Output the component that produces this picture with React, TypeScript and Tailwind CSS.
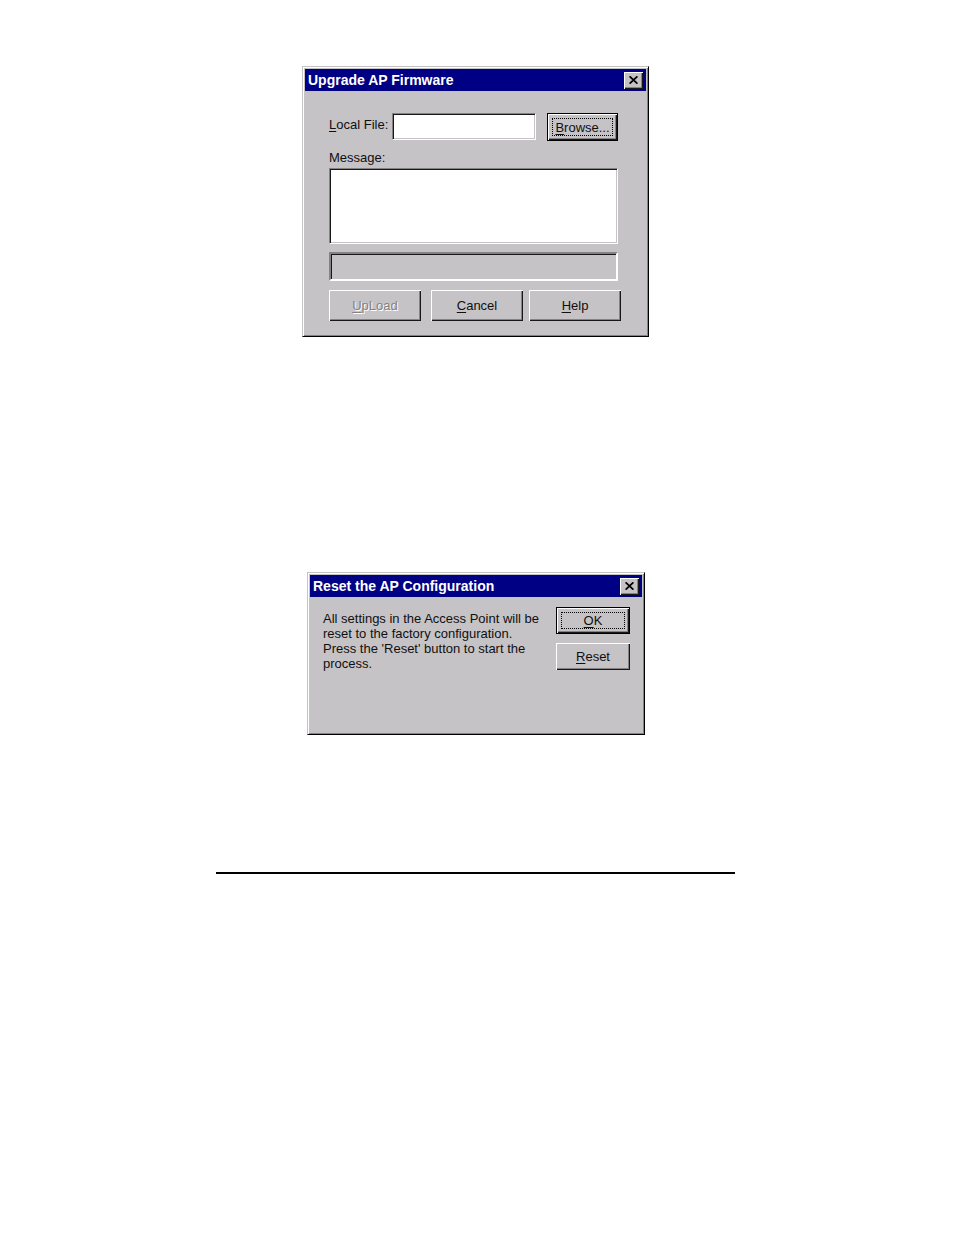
import { useState, type ReactNode } from "react";
import { clsx } from "clsx";

const raised =
  "shadow-[inset_1px_1px_#fff,inset_-1px_-1px_#181818,inset_-2px_-2px_#848284]";
const sunken =
  "border border-t-[#848284] border-l-[#848284] border-r-white border-b-white shadow-[inset_1px_1px_#181818,inset_-1px_-1px_#c6c3c6]";

function CloseButton() {
  return (
    <button
      type="button"
      aria-label="Close"
      className={clsx("flex h-[17px] w-[19px] items-center justify-center bg-[#c6c3c6]", raised)}
    >
      <svg viewBox="0 0 9 8" className="h-2 w-[9px]" fill="none" stroke="#000" strokeWidth="1.7">
        <path d="M0.6 0.3 8.4 7.7M8.4 0.3 0.6 7.7" />
      </svg>
    </button>
  );
}

type DialogProps = {
  title: string;
  className: string;
  children: ReactNode;
};

function Dialog({ title, className, children }: DialogProps) {
  return (
    <section
      aria-label={title}
      className={clsx(
        "w-full border border-t-[#c6c3c6] border-l-[#c6c3c6] border-r-black border-b-black bg-[#c6c3c6] p-[2px] shadow-[inset_1px_1px_#fff,inset_-1px_-1px_#848284]",
        className,
      )}
    >
      <header className="flex h-[22px] items-center justify-between bg-[#000084] pr-[3px] pl-[3px]">
        <h2 className="text-[14px] leading-[20px] font-bold text-white">{title}</h2>
        <CloseButton />
      </header>
      {children}
    </section>
  );
}

type PushButtonProps = {
  hotkey: string;
  label: string;
  className: string;
  isDefault?: boolean;
  disabled?: boolean;
};

function PushButton({ hotkey, label, className, isDefault, disabled }: PushButtonProps) {
  return (
    <button
      type="button"
      disabled={disabled}
      className={clsx(
        "flex bg-[#c6c3c6] p-1 leading-[15px]",
        raised,
        isDefault && "border border-black",
        disabled ? "text-[#848284] [text-shadow:1px_1px_#fff]" : "text-[#101010]",
        className,
      )}
    >
      <span
        className={clsx(
          "flex flex-1 items-center justify-center self-stretch border",
          isDefault ? "border-dotted border-black" : "border-transparent",
        )}
      >
        <u className="underline-offset-2">{hotkey}</u>
        {label}
      </span>
    </button>
  );
}

function UpgradeDialog() {
  const [file, setFile] = useState("");

  return (
    <Dialog title="Upgrade AP Firmware" className="max-w-[347px]">
      <div className="pt-[22px] pr-[25px] pb-[13px] pl-6">
        <div className="flex items-start pr-[3px]">
          <label htmlFor="local-file" className="w-[63px] shrink-0 pt-1 leading-[15px]">
            <u className="underline-offset-2">L</u>ocal File:
          </label>
          <input
            id="local-file"
            type="text"
            value={file}
            onChange={(e) => setFile(e.target.value)}
            className={clsx("h-[27px] min-w-0 flex-1 bg-white px-1 outline-none", sunken)}
          />
          <PushButton hotkey="B" label="rowse..." isDefault className="ml-[11px] h-7 w-[71px]" />
        </div>

        <div className="mt-[9px] pr-[3px]">
          <label htmlFor="message" className="block leading-[15px]">
            Message:
          </label>
          <textarea
            id="message"
            readOnly
            className={clsx("mt-[3px] block h-[76px] w-full resize-none bg-white p-1 outline-none", sunken)}
          />
          <div
            role="progressbar"
            aria-label="Upload progress"
            aria-valuenow={0}
            className="mt-2 h-[29px] border-2 border-t-[#848284] border-r-white border-b-white border-l-[#848284] shadow-[inset_1px_1px_#181818]"
          />
        </div>

        <div className="mt-[9px] flex">
          <PushButton hotkey="U" label="pLoad" disabled className="h-[31px] w-[92px]" />
          <PushButton hotkey="C" label="ancel" className="ml-[10px] h-[31px] w-[92px]" />
          <PushButton hotkey="H" label="elp" className="ml-[6px] h-[31px] w-[92px]" />
        </div>
      </div>
    </Dialog>
  );
}

function ResetDialog() {
  return (
    <Dialog title="Reset the AP Configuration" className="ml-px max-w-[338px]">
      <div className="flex h-[135px] items-start justify-between pt-[10px] pr-3 pl-[13px]">
        <p className="pt-1 leading-[15px] whitespace-nowrap">
          All settings in the Access Point will be
          <br />
          reset to the factory configuration.
          <br />
          Press the 'Reset' button to start the
          <br />
          process.
        </p>
        <div className="flex flex-col gap-[9px]">
          <PushButton hotkey="O" label="K" isDefault className="h-[27px] w-[74px]" />
          <PushButton hotkey="R" label="eset" className="h-[27px] w-[74px]" />
        </div>
      </div>
    </Dialog>
  );
}

export default function App() {
  return (
    <main className="min-h-screen bg-white pt-[66px] pr-[3px] font-['Liberation_Sans',Arial,sans-serif] text-[13px] text-[#101010]">
      <div className="mx-auto flex max-w-[519px] flex-col items-center">
        <UpgradeDialog />
        <div className="h-[235px]" />
        <ResetDialog />
        <hr className="mt-[137px] w-full border-t-2 border-black" />
      </div>
    </main>
  );
}
